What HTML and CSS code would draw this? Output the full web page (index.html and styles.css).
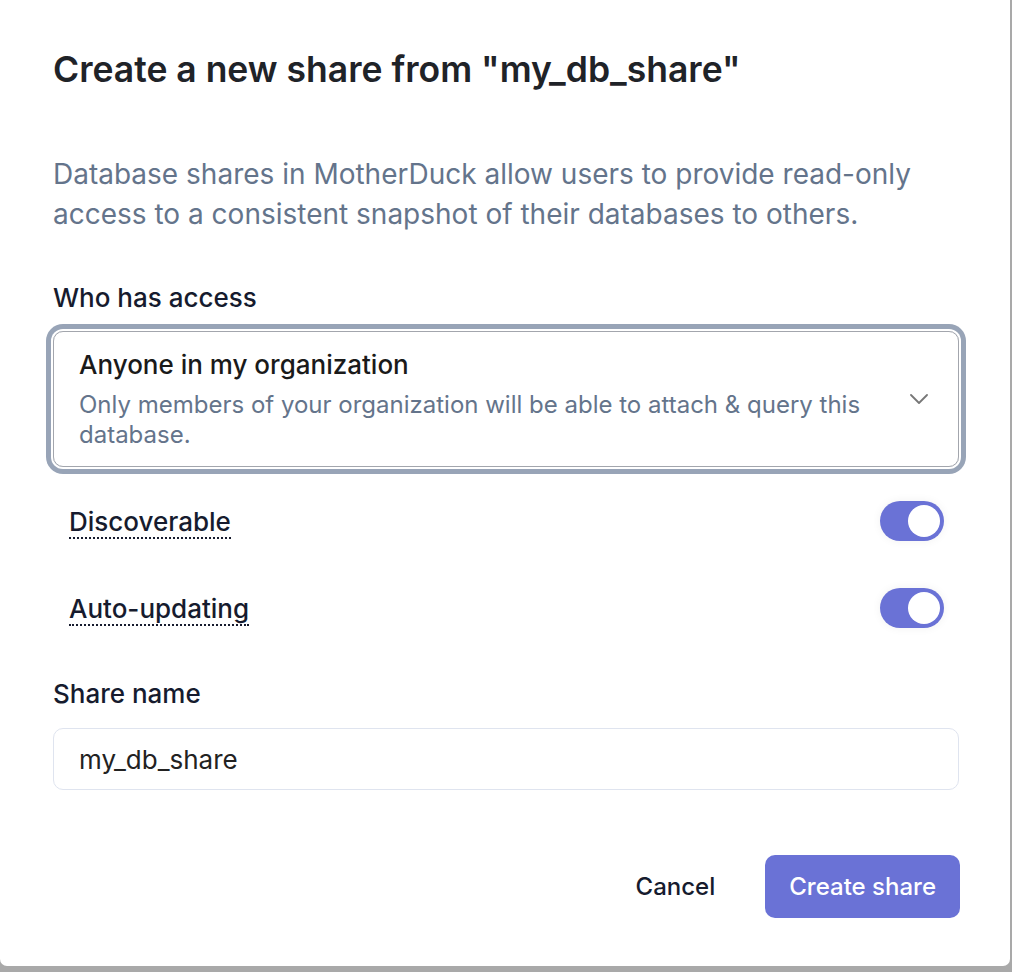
FILE: index.html
```html
<!DOCTYPE html>
<html lang="en">
<head>
<meta charset="utf-8">
<title>Create share</title>
<link rel="stylesheet" href="styles.css">
</head>
<body>
<div class="dialog">
  <h1 class="title">Create a new share from "my_db_share"</h1>
  <p class="desc">Database shares in MotherDuck allow users to provide read-only access to a consistent snapshot of their databases to others.</p>
  <div class="label">Who has access</div>
  <div class="select">
    <div class="select-text">
      <div class="select-title">Anyone in my organization</div>
      <div class="select-sub">Only members of your organization will be able to attach &amp; query this database.</div>
    </div>
    <svg class="chevron" width="18" height="10" viewBox="0 0 18 10"><path d="M1 1 L9 9 L17 1" fill="none" stroke="#777" stroke-width="1.8" stroke-linecap="round" stroke-linejoin="round"/></svg>
  </div>
  <div class="toggles">
    <div class="toggle-row">
      <span class="toggle-label">Discoverable</span>
      <span class="switch"><span class="knob"></span></span>
    </div>
    <div class="toggle-row">
      <span class="toggle-label">Auto-updating</span>
      <span class="switch"><span class="knob"></span></span>
    </div>
  </div>
  <div class="label name-label">Share name</div>
  <div class="input">my_db_share</div>
  <div class="actions">
    <button class="btn btn-cancel">Cancel</button>
    <button class="btn btn-primary">Create share</button>
  </div>
</div>
</body>
</html>
```

FILE: styles.css
```css
* { box-sizing: border-box; }
html, body { margin: 0; padding: 0; }
body {
  background: #a9a9a9;
  font-family: Inter, "Noto Sans", sans-serif;
  width: 1012px;
  height: 972px;
  overflow: hidden;
}
.dialog {
  width: 1010px;
  height: 966px;
  background: #fff;
  border-radius: 0 0 7px 7px;
  padding: 48px 51px 0 53px;
}
.title {
  margin: 0;
  font-size: 35.5px;
  line-height: 44px;
  font-weight: 600;
  color: #1f2328;
}
.desc {
  margin: 62px 0 0;
  font-size: 28px;
  line-height: 40px;
  color: #64748b;
  font-weight: 400;
}
.label {
  margin-top: 46px;
  font-size: 26px;
  line-height: 36px;
  font-weight: 500;
  color: #161b2e;
}
.select {
  margin-top: 15px;
  border: 1.5px solid #a3a6ad;
  border-radius: 10px;
  box-shadow: 0 0 0 2px #fff, 0 0 0 7px #98a4b7;
  padding: 16px 30px 16px 25px;
  display: flex;
  align-items: center;
  gap: 20px;
}
.select-text { flex: 1; }
.select-title {
  font-size: 26px;
  line-height: 34px;
  font-weight: 500;
  color: #1a1a1a;
}
.select-sub {
  margin-top: 8px;
  font-size: 24px;
  line-height: 30px;
  color: #64748b;
}
.chevron { flex: none; }
.toggles {
  margin-top: 34px;
  padding: 0 15px 0 16px;
  display: flex;
  flex-direction: column;
  gap: 47px;
}
.toggle-row {
  display: flex;
  align-items: center;
  justify-content: space-between;
  height: 40px;
}
.toggle-label {
  font-size: 26px;
  line-height: 30px;
  font-weight: 500;
  color: #161b2e;
  border-bottom: 2px dotted #161b2e;
  margin-top: 4px;
}
.switch {
  width: 64px;
  height: 40px;
  border-radius: 20px;
  background: #6a72d6;
  box-shadow: 0 0 10px rgba(0, 0, 0, 0.06);
  display: flex;
  align-items: center;
  justify-content: flex-end;
  padding: 0 4px;
}
.knob {
  width: 32px;
  height: 32px;
  border-radius: 50%;
  background: #fff;
}
.name-label { margin-top: 48px; }
.input {
  margin-top: 16px;
  height: 62px;
  border: 1.5px solid #dfe4ef;
  border-radius: 10px;
  padding: 0 25px;
  display: flex;
  align-items: center;
  font-size: 26px;
  color: #222;
}
.actions {
  margin-top: 65px;
  margin-right: -1px;
  display: flex;
  justify-content: flex-end;
  gap: 26px;
}
.btn {
  font-family: inherit;
  font-size: 24px;
  font-weight: 500;
  height: 63px;
  border: none;
  border-radius: 10px;
  padding: 0 24px;
  white-space: nowrap;
  cursor: pointer;
}
.btn-cancel {
  background: transparent;
  color: #161b2e;
}
.btn-primary {
  background: #6a72d6;
  color: #fff;
}
```
